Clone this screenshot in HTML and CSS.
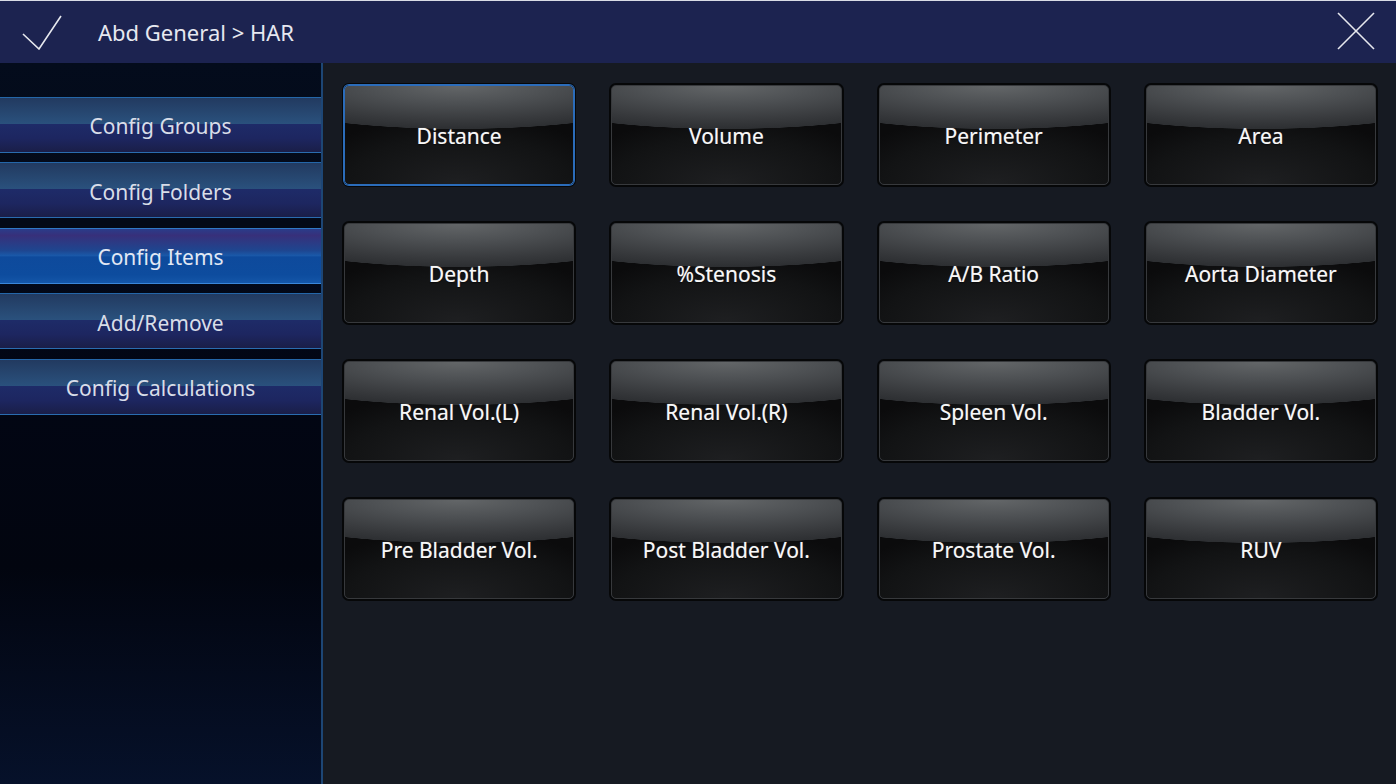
FILE: index.html
```html
<!DOCTYPE html>
<html lang="en">
<head>
    <meta charset="UTF-8">
    <meta name="viewport" content="width=device-width, initial-scale=1.0">
    <title>Abd General > HAR</title>
    <link rel="stylesheet" href="styles.css">
</head>
<body>
    <div class="header">
        <button class="icon-btn" title="Confirm">
            <svg width="40" height="36" viewBox="0 0 40 36">
                <polyline points="1,20 17,35 39,2" fill="none" stroke="#e6e8ee" stroke-width="1.6"/>
            </svg>
        </button>
        <div class="title">Abd General &gt; HAR</div>
        <button class="icon-btn close" title="Close">
            <svg width="38" height="38" viewBox="0 0 38 38">
                <line x1="1" y1="1" x2="37" y2="37" stroke="#e6e8ee" stroke-width="1.6"/>
                <line x1="37" y1="1" x2="1" y2="37" stroke="#e6e8ee" stroke-width="1.6"/>
            </svg>
        </button>
    </div>

    <div class="layout">
        <div class="sidebar">
            <div class="side-btn">Config Groups</div>
            <div class="side-btn">Config Folders</div>
            <div class="side-btn active">Config Items</div>
            <div class="side-btn">Add/Remove</div>
            <div class="side-btn">Config Calculations</div>
        </div>

        <div class="main">
            <div class="grid">
                <div class="calc-btn selected">Distance</div>
                <div class="calc-btn">Volume</div>
                <div class="calc-btn">Perimeter</div>
                <div class="calc-btn">Area</div>
                <div class="calc-btn">Depth</div>
                <div class="calc-btn">%Stenosis</div>
                <div class="calc-btn">A/B Ratio</div>
                <div class="calc-btn">Aorta Diameter</div>
                <div class="calc-btn">Renal Vol.(L)</div>
                <div class="calc-btn">Renal Vol.(R)</div>
                <div class="calc-btn">Spleen Vol.</div>
                <div class="calc-btn">Bladder Vol.</div>
                <div class="calc-btn">Pre Bladder Vol.</div>
                <div class="calc-btn">Post Bladder Vol.</div>
                <div class="calc-btn">Prostate Vol.</div>
                <div class="calc-btn">RUV</div>
            </div>
        </div>
    </div>
</body>
</html>
```

FILE: styles.css
```css
html, body {
    height: 100%;
}
body {
    margin: 0;
    font-family: "Noto Sans", "Open Sans", sans-serif;
    background: #161a22;
    color: #e4e6ee;
    display: flex;
    flex-direction: column;
    overflow: hidden;
}

/* top bar */
.header {
    height: 62px;
    border-top: 1px solid #d9dce6;
    background: #1c2350;
    display: flex;
    align-items: center;
    padding: 0 21px 0 22px;
}
.icon-btn {
    background: none;
    border: none;
    padding: 0;
    display: flex;
    cursor: pointer;
}
.icon-btn svg {
    display: block;
}
.title {
    flex: 1;
    margin-left: 36px;
    font-size: 22px;
    color: #e6e8f0;
}
.close {
    margin-top: -2px;
}

.layout {
    flex: 1;
    display: flex;
}

/* left menu */
.sidebar {
    width: 321px;
    border-right: 2px solid #1d4675;
    background: linear-gradient(#040c1c 0%, #020614 45%, #02050f 70%, #06112a 100%);
    display: flex;
    flex-direction: column;
    gap: 9.5px;
    padding-top: 33.5px;
}
.side-btn {
    box-sizing: content-box;
    height: 51px;
    padding-top: 3px;
    border-top: 1px solid #2466a8;
    border-bottom: 1px solid #2a6cb0;
    background: linear-gradient(#223a60 0%, #2a517d 48%, #1e2b68 49%, #1d2660 75%, #1a1e48 100%);
    display: flex;
    align-items: center;
    justify-content: center;
    font-size: 21px;
    color: #d8dde8;
}
.side-btn.active {
    border-top-color: #2f78c8;
    border-bottom-color: #3a86d8;
    background: linear-gradient(#2a3c8a 0%, #37307a 12%, #1e4690 40%, #1a58a8 49%, #0e4a9c 52%, #0d4c9e 85%, #1456a8 100%);
    color: #e2e8f4;
}

/* measurement grid */
.main {
    flex: 1;
    padding: 22px 20px 0 21px;
}
.grid {
    display: grid;
    grid-template-columns: repeat(4, 1fr);
    grid-auto-rows: 100px;
    column-gap: 37px;
    row-gap: 38px;
}
.calc-btn {
    border: 1px solid #37393c;
    border-radius: 5px;
    box-shadow: 0 0 0 2px #060708;
    background:
        radial-gradient(ellipse 100% 44% at 50% 0%, #636668 0%, #4d5053 40%, #37393c 80%, #2d2f32 99%, rgba(0,0,0,0) 100%),
        radial-gradient(ellipse 70% 70% at 50% 100%, #1e1f21 0%, #121314 70%, #0b0b0c 100%);
    display: flex;
    align-items: center;
    justify-content: center;
    padding-top: 2px;
    font-size: 21px;
    color: #f8f8f8;
    text-shadow: 0 0 1px rgba(255, 255, 255, 0.45), 0 1px 1px #000;
}
.calc-btn.selected {
    border-color: #2b6cba;
    box-shadow: 0 0 0 1px #2b6cba, 0 0 0 2px #060708;
}
```
